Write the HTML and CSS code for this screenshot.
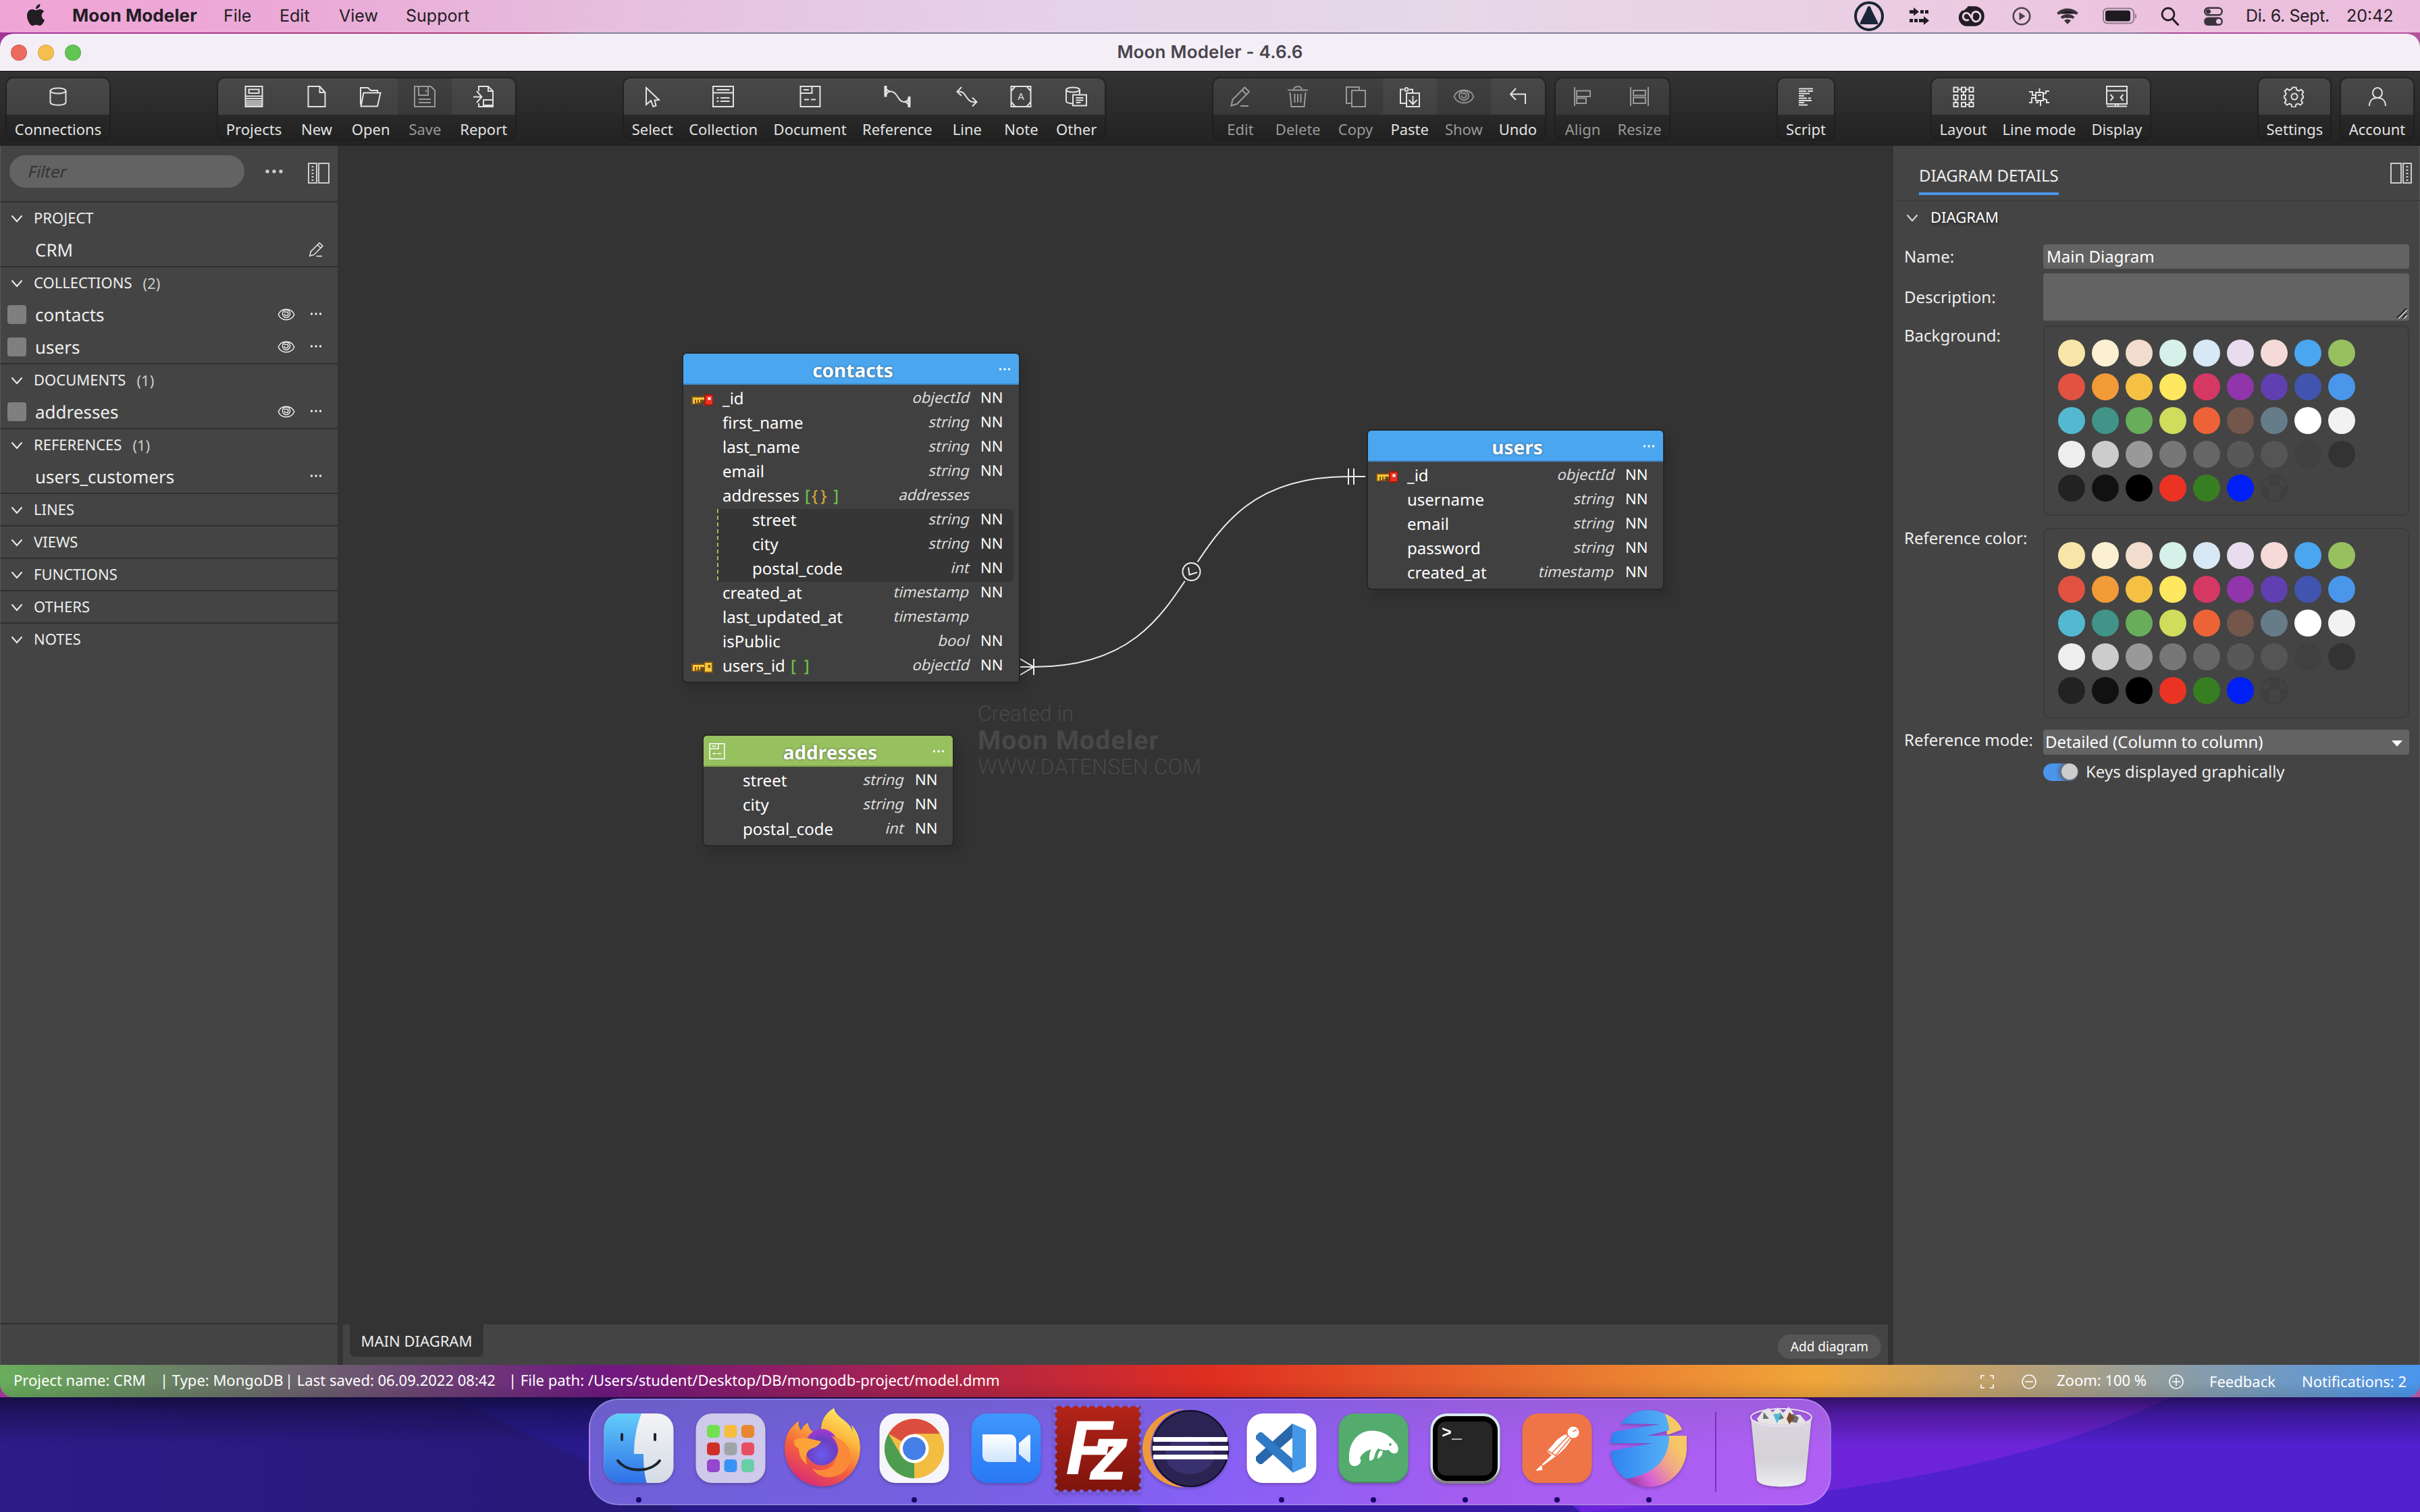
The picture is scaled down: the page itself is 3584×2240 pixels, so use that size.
FILE: index.html
```html
<!DOCTYPE html>
<html lang="en">
<head>
<meta charset="utf-8">
<title>Moon Modeler - 4.6.6</title>
<link rel="stylesheet" href="styles.css">
</head>
<body>
<svg class="defs" aria-hidden="true">
  <defs>
    <symbol id="chevron" viewBox="0 0 18 12"><path d="M1.500 1.500L9 10l7.500-8.500" fill="none" stroke="currentColor" stroke-width="2"/></symbol>
    <symbol id="dots" viewBox="0 0 18 6"><circle cx="2.500" cy="3" r="1.700"/><circle cx="9" cy="3" r="1.700"/><circle cx="15.500" cy="3" r="1.700"/></symbol>
    <symbol id="eye" viewBox="0 0 32 24"><g fill="none" stroke="currentColor" stroke-width="1.800"><path d="M1.500 12C4 6 9.500 2.500 16 2.500S28 6 30.500 12C28 18 22.500 21.500 16 21.500S4 18 1.500 12z"/><circle cx="16" cy="10.500" r="7"/><path d="M12 6.500c1.500 2.500 3 .500 4 .500a3.500 3.500 0 1 1-3.500 3.500"/></g></symbol>
    <symbol id="pencil" viewBox="0 0 32 32"><g fill="none" stroke="currentColor" stroke-width="2"><path d="M2.500 29.500l2-9L22.500 2.500l6.500 6.500L11 27z"/><path d="M18.500 6.500l6.500 6.500M16 30h12"/></g></symbol>
    <symbol id="keyred" viewBox="0 0 32 18"><path d="M0 3h18V0h14v17H18v-6h-3v4H0z" fill="#845512"/><path d="M2 5h17v3H2zM2 5h3v9H2zM7 8h2v5H7zM11 8h2v4h-2z" fill="#f5c83c"/><path d="M19 0h13v17H19z" fill="#a1160e"/><path d="M21 2h10v13H21z" fill="#ec3323"/><path d="M24.500 4.500h4v4h-4z" fill="#fff"/></symbol>
    <symbol id="keygold" viewBox="0 0 32 18"><path d="M0 3h18V0h14v17H18v-6h-3v4H0z" fill="#845512"/><path d="M2 5h17v3H2zM2 5h3v9H2zM7 8h2v5H7zM11 8h2v4h-2zM20 2h10v13H20z" fill="#f5c83c"/><path d="M24.500 5h3.500v4.500h-3.500z" fill="#845512"/></symbol>
    <symbol id="docicon" viewBox="0 0 32 32"><path d="M1.500 1h29v30h-29zM1.500 11h17V1M6 6h8M7 20.500h7M17 20.500h7" fill="none" stroke="currentColor" stroke-width="2"/></symbol>
  </defs>
</svg>

<header class="menubar">
  <svg class="apple" viewBox="0 0 24 24"><path d="M12.152 6.896c-.948 0-2.415-1.078-3.960-1.040-2.040.027-3.910 1.183-4.961 3.014-2.117 3.675-.546 9.103 1.519 12.090 1.013 1.454 2.208 3.090 3.792 3.039 1.520-.065 2.090-.987 3.935-.987 1.831 0 2.350.987 3.960.948 1.637-.026 2.676-1.480 3.676-2.948 1.156-1.688 1.636-3.325 1.662-3.415-.039-.013-3.182-1.221-3.220-4.857-.026-3.040 2.480-4.494 2.597-4.559-1.429-2.090-3.623-2.324-4.390-2.376-2-.156-3.675 1.090-4.610 1.090zM15.530 3.830c.843-1.012 1.400-2.427 1.245-3.830-1.207.052-2.662.805-3.532 1.818-.780.896-1.454 2.338-1.273 3.714 1.338.104 2.715-.688 3.559-1.701"/></svg>
  <nav class="menus"><b>Moon Modeler</b><span>File</span><span>Edit</span><span>View</span><span>Support</span></nav>
  <div class="tray">
    <svg width="44" height="44" viewBox="0 0 44 44"><circle cx="22" cy="22" r="20" fill="none" stroke="#1b2638" stroke-width="4"/><path d="M22 7c2 0 3 3 4 6l9 18c1 2 0 3-1 3H10c-1 0-2-1-1-3l9-18c1-3 2-6 4-6z" fill="#1b2638"/></svg>
    <svg class="t38" width="30" height="28" viewBox="0 0 30 28" fill="#5f5861"><path d="M0 5h6V1l8 6.500-8 6V10H0zM16 5h5v5h-5zM23 5h5v5h-5zM0 18h5v5H0zM7 18h5v5H7zM14 18h7v-4l8 6.500-8 6.500v-4h-7z"/></svg>
    <svg class="t42" width="40" height="32" viewBox="0 0 40 32" fill="none"><path d="M14 2.500h10a13.500 13.500 0 0 1 0 27H12A11.500 11.500 0 0 1 8 8" stroke="#231d24" stroke-width="2.600"/><circle cx="13.500" cy="18" r="11" fill="#231d24"/><circle cx="24.500" cy="15.500" r="11.500" fill="#231d24"/><path d="M17 22c-4 3-9 1-9.500-3.500C7 14 12 11 16 14l8 8c4 2 9-1 9-6.500s-5-9-9.500-7c-4 2-4 6-2 9" stroke="#ecd0e6" stroke-width="2.800" transform="rotate(12 20 16)"/></svg>
    <svg class="t40" width="28" height="28" viewBox="0 0 28 28"><circle cx="14" cy="14" r="12.200" fill="none" stroke="#4a434b" stroke-width="2.600"/><path d="M10.500 8l9 6-9 6z" fill="#4a434b"/></svg>
    <svg class="t38" width="32" height="26" viewBox="0 0 32 26" fill="none" stroke="#3a333b" stroke-width="4"><path d="M1.500 9.500a20.500 20.500 0 0 1 29 0M7 15.500a13 13 0 0 1 18 0"/><path d="M16 25l-5-5.500a7 7 0 0 1 10 0z" fill="#3a333b" stroke="none"/></svg>
    <svg class="t36" width="52" height="26" viewBox="0 0 52 26"><rect x="1" y="1.500" width="45" height="22" rx="6" fill="none" stroke="#8f7d8d" stroke-width="2"/><rect x="4" y="4.500" width="37" height="16" rx="3.500" fill="#1f1a20"/><path d="M48 9c3 1 3 7 0 8z" fill="#8f7d8d"/></svg>
    <svg class="t34" width="28" height="28" viewBox="0 0 28 28"><circle cx="11" cy="11" r="9" fill="none" stroke="#231d24" stroke-width="2.800"/><path d="M17.500 18l8 8.500" stroke="#231d24" stroke-width="3.200" stroke-linecap="round"/></svg>
    <svg class="t36" width="28" height="28" viewBox="0 0 28 28"><rect x="1.200" y="1.800" width="25.600" height="10.500" rx="5.200" fill="none" stroke="#3a333b" stroke-width="2.400"/><circle cx="6.500" cy="7" r="3.500" fill="#3a333b"/><rect x="0" y="15.500" width="28" height="12.500" rx="6.200" fill="#3a333b"/><circle cx="21.800" cy="21.700" r="3.800" fill="#ecc6e0"/></svg>
    <span class="date">Di. 6. Sept.</span><span class="time">20:42</span>
  </div>
</header>

<main class="window">
  <div class="titlebar"><i class="light red"></i><i class="light amber"></i><i class="light green"></i><h1>Moon Modeler - 4.6.6</h1></div>

  <div class="toolbar">
    <div class="group g1">
      <button class="tool"><span class="ico"><svg viewBox="0 0 32 32"><ellipse cx="16" cy="7.500" rx="11.500" ry="4"/><path d="M4.500 7.500v17c0 5.500 23 5.500 23 0v-17"/></svg></span><em>Connections</em></button>
    </div>
    <div class="group g2">
      <button class="tool"><span class="ico"><svg viewBox="0 0 32 32"><path d="M3.500 1h25v30h-25zM8.500 5.500h15V11h-15zM4 15.500h24M4 19h24M4 22.500h24M4 25.500h24M4 28.500h24"/></svg></span><em>Projects</em></button>
      <button class="tool"><span class="ico"><svg viewBox="0 0 32 32"><path d="M3.500 1h17l8 9v21h-25zM20.500 1v9h8"/></svg></span><em>New</em></button>
      <button class="tool"><span class="ico"><svg viewBox="0 0 32 32"><path d="M1 28V3h11l4 4h10v4M5.500 10.500h25L26 30.500H1.500z"/></svg></span><em>Open</em></button>
      <button class="tool off"><span class="ico"><svg viewBox="0 0 32 32"><path d="M1 1h24l6 6v24H1zM7 1v13h14V1M18 6.500v3M7 20h18M7 25h18"/></svg></span><em>Save</em></button>
      <button class="tool"><span class="ico"><svg viewBox="0 0 32 32"><path d="M9 8V1h14l7 7v23H9v-5M23 1v7h7M30 21H16v8h14M1 16.500h12M6 8l7.500 8.500L6 25"/></svg></span><em>Report</em></button>
    </div>
    <div class="group g3">
      <button class="tool"><span class="ico"><svg viewBox="0 0 32 32"><path d="M7 3l19 18-6.500.500 2 8-4 1.500-3.500-9L7 28z"/></svg></span><em>Select</em></button>
      <button class="tool"><span class="ico"><svg viewBox="0 0 32 32"><path d="M1 1h30v30H1zM1 10.500h30M6.500 6h19M6.500 18h3M12 18h13.500M6.500 23h3M12 23h13.500"/></svg></span><em>Collection</em></button>
      <button class="tool"><span class="ico"><svg><use href="#docicon"/></svg></span><em>Document</em></button>
      <button class="tool"><span class="ico"><svg class="wide" viewBox="0 0 40 32"><path d="M1.500 1h2v14.500h-2zM3.500 3c0 3 3 5.500 7 5.500M3.500 14c0-3 3-5.500 7-5.500 4 0 7 3 10 8s5 7.500 9 7.500M36.500 17h2v14.500h-2zM36.500 18.500c0 3-3 5.500-7 5.500M36.500 29.500c0-3-3-5.500-7-5.500"/></svg></span><em>Reference</em></button>
      <button class="tool"><span class="ico"><svg viewBox="0 0 32 32"><path d="M8 2L1.500 9 8 15M1.500 9c9-1 10 2 14 8s7 8 15 7M24 17.500l6.500 6.500-6.500 6.500"/></svg></span><em>Line</em></button>
      <button class="tool"><span class="ico"><svg viewBox="0 0 32 32"><path d="M1.500 1h29v30h-29zM1.500 8l6-7M30.500 8l-6-7M1.500 24l6 7M30.500 24l-6 7"/><text x="16" y="20.500">A</text></svg></span><em>Note</em></button>
      <button class="tool"><span class="ico"><svg viewBox="0 0 32 32"><ellipse cx="11" cy="6" rx="10" ry="3.500"/><path d="M1 6v17c0 2 4 3 9 3.500M21 6v7M11 13.500h20v16H11zM15.500 18h11M15.500 21.500h11M15.500 25h7"/></svg></span><em>Other</em></button>
    </div>
    <div class="group g4">
      <button class="tool off"><span class="ico"><svg><use href="#pencil"/></svg></span><em>Edit</em></button>
      <button class="tool off"><span class="ico"><svg viewBox="0 0 32 32"><path d="M1 6.500h30M10 6c0-6.500 12-6.500 12 0M4.500 10l2 21h19l2-21M11.500 12v13M16 12v13M20.500 12v13"/></svg></span><em>Delete</em></button>
      <button class="tool off"><span class="ico"><svg viewBox="0 0 32 32"><path d="M10 26H2V2h19v4M10 7h20v24H10z"/></svg></span><em>Copy</em></button>
      <button class="tool"><span class="ico"><svg viewBox="0 0 32 32"><path d="M10 26H2V5.500h5M15 5.500h5V10M11 11h19v20H11zM20.500 15v12M14.500 21l6 6.500 6-6.500"/><circle cx="11" cy="5.500" r="2.500"/></svg></span><em>Paste</em></button>
      <button class="tool off"><span class="ico"><svg><use href="#eye"/></svg></span><em>Show</em></button>
      <button class="tool"><span class="ico"><svg viewBox="0 0 32 32"><path d="M13 4L5 12.500l8 8.500M5 12.500h22V27"/></svg></span><em>Undo</em></button>
    </div>
    <div class="group g5">
      <button class="tool off"><span class="ico"><svg viewBox="0 0 32 32"><path d="M4 2v28M7 7.500h20v8.500H7zM7 18.500h14v7.500H7z"/></svg></span><em>Align</em></button>
      <button class="tool off"><span class="ico"><svg viewBox="0 0 32 32"><path d="M3 2v28M29 2v28M7 7h18v7.500H7zM7 17.500h18V26H7z"/></svg></span><em>Resize</em></button>
    </div>
    <div class="group g6">
      <button class="tool"><span class="ico"><svg viewBox="0 0 32 32"><path d="M5 4.500h21M5 8h11M18 8h8M5 11.500h16M5 15h8M5 18.500h12M19 18.500h4M5 22h19M5 25h8M5 28.500h13"/></svg></span><em>Script</em></button>
    </div>
    <div class="group g7">
      <button class="tool"><span class="ico"><svg viewBox="0 0 32 32"><path d="M1.500 2.500h6V9h-6zM13 2.500h6V9h-6zM24.500 2.500h6V9h-6zM1.500 14h6v6.500h-6zM13 14h6v6.500h-6zM24.500 14h6v6.500h-6zM1.500 25h6v6h-6zM13 25h6v6h-6zM24.500 25h6v6h-6zM7.500 5.500H13M19 5.500h5.500M16 9v5M4.500 20.500V25M27.500 20.500V25M19 28h5.500"/></svg></span><em>Layout</em></button>
      <button class="tool"><span class="ico"><svg viewBox="0 0 32 32"><path d="M11 10h11v12H11zM14 14h5M16.500 4v6M1 9h5v5h5M22 12l4-1V8h5M11 18H5v7H1M14 22v3h-3M18 22v8M22 19l5 2v4h4"/></svg></span><em>Line mode</em></button>
      <button class="tool"><span class="ico"><svg viewBox="0 0 32 32"><path d="M1 1h30v26H1zM1 7.500h30M6.500 13l4 4.500-4 4.500M25.500 13l-4 4.500 4 4.500M1 30.500h30M14 27v3M18 27v3"/></svg></span><em>Display</em></button>
    </div>
    <div class="group g8">
      <button class="tool"><span class="ico"><svg viewBox="0 0 32 32"><circle cx="16" cy="16" r="4.500"/><path d="M13.500 2.500h5l1 4 3 1.200 3.600-2 3.200 3.400-2 3.500 1.200 3 .500 0v2.500l-1.700.800-1.200 3 2 3.300-3.200 3.400-3.500-2-3 1.200-1 4h-5l-1-4-3-1.200-3.400 2-3.300-3.400 2-3.400-1.200-3-2-1v-2.500l2-.900 1.200-2.900-2-3.500 3.300-3.400 3.400 2 3-1.200z"/></svg></span><em>Settings</em></button>
    </div>
    <div class="group g9">
      <button class="tool"><span class="ico"><svg viewBox="0 0 32 32"><ellipse cx="16" cy="10.500" rx="7" ry="7.500"/><path d="M4 30c0-8 5-12 12-12s12 4 12 12"/></svg></span><em>Account</em></button>
    </div>
  </div>

  <div class="workspace">
    <aside class="sidebar">
      <div class="filterbar">
        <div class="filter"><span>Filter</span></div>
        <svg class="more" viewBox="0 0 28 8"><circle cx="4" cy="4" r="2.700"/><circle cx="14" cy="4" r="2.700"/><circle cx="24" cy="4" r="2.700"/></svg>
        <svg class="panelico" viewBox="0 0 32 31"><path d="M1 1h12v29H1zM16 1h15v29H16z" fill="none" stroke="#ccc" stroke-width="2"/><path d="M7 5v22" stroke="#ccc" stroke-width="3" stroke-dasharray="2 3"/></svg>
      </div>
      <section><h2><svg><use href="#chevron"/></svg>PROJECT</h2>
        <div class="item"><i></i><span>CRM</span><svg class="pen"><use href="#pencil"/></svg></div></section>
      <section><h2><svg><use href="#chevron"/></svg>COLLECTIONS<small>(2)</small></h2>
        <div class="item"><i class="box"></i><span>contacts</span><svg class="eye"><use href="#eye"/></svg><svg class="dots"><use href="#dots"/></svg></div>
        <div class="item"><i class="box"></i><span>users</span><svg class="eye"><use href="#eye"/></svg><svg class="dots"><use href="#dots"/></svg></div></section>
      <section><h2><svg><use href="#chevron"/></svg>DOCUMENTS<small>(1)</small></h2>
        <div class="item"><i class="box"></i><span>addresses</span><svg class="eye"><use href="#eye"/></svg><svg class="dots"><use href="#dots"/></svg></div></section>
      <section><h2><svg><use href="#chevron"/></svg>REFERENCES<small>(1)</small></h2>
        <div class="item"><i></i><span>users_customers</span><svg class="dots"><use href="#dots"/></svg></div></section>
      <section><h2><svg><use href="#chevron"/></svg>LINES</h2></section>
      <section><h2><svg><use href="#chevron"/></svg>VIEWS</h2></section>
      <section><h2><svg><use href="#chevron"/></svg>FUNCTIONS</h2></section>
      <section><h2><svg><use href="#chevron"/></svg>OTHERS</h2></section>
      <section class="last"><h2><svg><use href="#chevron"/></svg>NOTES</h2></section>
      <div class="sidefoot"></div>
    </aside>

    <div class="center">
      <div class="canvas">
        <svg class="links" viewBox="500 216 2304 1746">
          <path d="M1509 988H1531C1812 988 1716 706 1997 706H2022M1509 975l22 13-22 13M1531 976v24M1997 694v24M2005 694v24" fill="none" stroke="#eee" stroke-width="2"/>
          <circle cx="1764.500" cy="847" r="17" fill="#333"/>
          <circle cx="1764.500" cy="847" r="13" fill="none" stroke="#eee" stroke-width="2"/>
          <path d="M1760 840.500l1.500 11 11.500-3.500" fill="none" stroke="#eee" stroke-width="2"/>
        </svg>
        <div class="watermark"><span>Created in</span><b>Moon Modeler</b><span class="site">WWW.DATENSEN.COM</span></div>

        <article class="node contacts">
          <header><h3>contacts</h3><svg class="dots"><use href="#dots"/></svg></header>
          <div class="row"><svg class="key"><use href="#keyred"/></svg><span>_id</span><em>objectId</em><b>NN</b></div>
          <div class="row"><span>first_name</span><em>string</em><b>NN</b></div>
          <div class="row"><span>last_name</span><em>string</em><b>NN</b></div>
          <div class="row"><span>email</span><em>string</em><b>NN</b></div>
          <div class="row"><span>addresses<i class="sq open">[</i><i class="cu">{</i><i class="cu two">}</i><i class="sq far">]</i></span><em>addresses</em><b></b></div>
          <div class="nested">
            <div class="row"><span>street</span><em>string</em><b>NN</b></div>
            <div class="row"><span>city</span><em>string</em><b>NN</b></div>
            <div class="row"><span>postal_code</span><em>int</em><b>NN</b></div>
          </div>
          <div class="row"><span>created_at</span><em>timestamp</em><b>NN</b></div>
          <div class="row"><span>last_updated_at</span><em>timestamp</em><b></b></div>
          <div class="row"><span>isPublic</span><em>bool</em><b>NN</b></div>
          <div class="row"><svg class="key"><use href="#keygold"/></svg><span>users_id<i class="sq open">[</i><i class="sq wide">]</i></span><em>objectId</em><b>NN</b></div>
        </article>

        <article class="node addresses">
          <header><svg class="doc"><use href="#docicon"/></svg><h3>addresses</h3><svg class="dots"><use href="#dots"/></svg></header>
          <div class="row"><span>street</span><em>string</em><b>NN</b></div>
          <div class="row"><span>city</span><em>string</em><b>NN</b></div>
          <div class="row"><span>postal_code</span><em>int</em><b>NN</b></div>
        </article>

        <article class="node users">
          <header><h3>users</h3><svg class="dots"><use href="#dots"/></svg></header>
          <div class="row"><svg class="key"><use href="#keyred"/></svg><span>_id</span><em>objectId</em><b>NN</b></div>
          <div class="row"><span>username</span><em>string</em><b>NN</b></div>
          <div class="row"><span>email</span><em>string</em><b>NN</b></div>
          <div class="row"><span>password</span><em>string</em><b>NN</b></div>
          <div class="row"><span>created_at</span><em>timestamp</em><b>NN</b></div>
        </article>
      </div>
      <div class="tabs"><div class="tab">MAIN DIAGRAM</div><button class="add">Add diagram</button></div>
    </div>

    <aside class="details">
      <div class="dhead"><h2>DIAGRAM DETAILS</h2>
        <svg class="panelico" viewBox="0 0 32 31"><path d="M1 1h15v29H1zM19 1h12v29H19z" fill="none" stroke="#ccc" stroke-width="2"/><path d="M25 5v22" stroke="#ccc" stroke-width="3" stroke-dasharray="2 3"/></svg></div>
      <h4><svg><use href="#chevron"/></svg>DIAGRAM</h4>
      <div class="field name"><label>Name:</label><div class="input">Main Diagram</div></div>
      <div class="field desc"><label>Description:</label><div class="input area"><svg viewBox="0 0 16 16"><path d="M1 15L15 1M9 15l6-6" stroke="#222" stroke-width="2"/><path d="M3 16L16 3M11 16l5-5" stroke="#ddd" stroke-width="1.500"/></svg></div></div>
      <div class="field pick"><label>Background:</label><div class="palette">
        <i style="background:#f7e6a8"></i><i style="background:#fbf1d2"></i><i style="background:#f1dccd"></i><i style="background:#d6f1e9"></i><i style="background:#d8e8f5"></i><i style="background:#e8dcee"></i><i style="background:#f5dad7"></i><i style="background:#4aa6ef"></i><i style="background:#97c05f"></i>
        <i style="background:#e15241"></i><i style="background:#f19c38"></i><i style="background:#f5c144"></i><i style="background:#fee860"></i><i style="background:#d63864"></i><i style="background:#9035aa"></i><i style="background:#603fb0"></i><i style="background:#4154af"></i><i style="background:#4a96ea"></i>
        <i style="background:#53b9d1"></i><i style="background:#419488"></i><i style="background:#67ad5b"></i><i style="background:#d0dc5b"></i><i style="background:#ed6337"></i><i style="background:#74564a"></i><i style="background:#667c89"></i><i style="background:#fff"></i><i style="background:#f2f2f2"></i>
        <i style="background:#eee"></i><i style="background:#ccc"></i><i style="background:#999"></i><i style="background:#777"></i><i style="background:#666"></i><i style="background:#585858"></i><i style="background:#555"></i><i style="background:#404040"></i><i style="background:#333"></i>
        <i style="background:#222"></i><i style="background:#111"></i><i style="background:#000"></i><i style="background:#eb3324"></i><i style="background:#377e22"></i><i style="background:#001ff5"></i><i class="none"></i>
      </div></div>
      <div class="field pick"><label>Reference color:</label><div class="palette">
        <i style="background:#f7e6a8"></i><i style="background:#fbf1d2"></i><i style="background:#f1dccd"></i><i style="background:#d6f1e9"></i><i style="background:#d8e8f5"></i><i style="background:#e8dcee"></i><i style="background:#f5dad7"></i><i style="background:#4aa6ef"></i><i style="background:#97c05f"></i>
        <i style="background:#e15241"></i><i style="background:#f19c38"></i><i style="background:#f5c144"></i><i style="background:#fee860"></i><i style="background:#d63864"></i><i style="background:#9035aa"></i><i style="background:#603fb0"></i><i style="background:#4154af"></i><i style="background:#4a96ea"></i>
        <i style="background:#53b9d1"></i><i style="background:#419488"></i><i style="background:#67ad5b"></i><i style="background:#d0dc5b"></i><i style="background:#ed6337"></i><i style="background:#74564a"></i><i style="background:#667c89"></i><i style="background:#fff"></i><i style="background:#f2f2f2"></i>
        <i style="background:#eee"></i><i style="background:#ccc"></i><i style="background:#999"></i><i style="background:#777"></i><i style="background:#666"></i><i style="background:#585858"></i><i style="background:#555"></i><i style="background:#404040"></i><i style="background:#333"></i>
        <i style="background:#222"></i><i style="background:#111"></i><i style="background:#000"></i><i style="background:#eb3324"></i><i style="background:#377e22"></i><i style="background:#001ff5"></i><i class="none"></i>
      </div></div>
      <div class="field mode"><label>Reference mode:</label><div class="input select">Detailed (Column to column)<svg viewBox="0 0 16 9"><path d="M0 0h16L8 9z" fill="#fff"/></svg></div></div>
      <div class="keys"><span class="switch"></span>Keys displayed graphically</div>
    </aside>
  </div>

  <footer class="status">
    <span class="s1">Project name: CRM</span><span class="s2">| Type: MongoDB</span><span class="s3">| Last saved: 06.09.2022 08:42</span><span class="s4">| File path: /Users/student/Desktop/DB/mongodb-project/model.dmm</span>
    <div class="right">
      <svg class="expand" viewBox="0 0 20 20"><path d="M1 6V1h5M14 1h5v5M19 14v5h-5M6 19H1v-5" fill="none" stroke="#fff" stroke-width="1.600"/></svg>
      <svg class="minus" viewBox="0 0 22 22"><circle cx="11" cy="11" r="10" fill="none" stroke="#fff" stroke-width="1.500"/><path d="M5 11h12" stroke="#fff" stroke-width="1.500"/></svg>
      <span class="zoom">Zoom: 100 %</span>
      <svg class="plus" viewBox="0 0 22 22"><circle cx="11" cy="11" r="10" fill="none" stroke="#fff" stroke-width="1.500"/><path d="M5 11h12M11 5v12" stroke="#fff" stroke-width="1.500"/></svg>
      <span class="fb">Feedback</span><span class="nt">Notifications: 2</span>
    </div>
  </footer>
</main>

<div class="desk">
  <svg class="wall" viewBox="0 0 3584 170" preserveAspectRatio="none">
    <path d="M660 0C780 50 900 110 1010 170H3584V0z" fill="#2a1c9c" opacity=".55"/>
    <path d="M1690 170C1660 130 1640 60 1620 0H3584V170z" fill="#3a19a8" opacity=".8"/>
    <path d="M2340 170C2290 130 2270 60 2250 0H3584V170z" fill="#5a22d4"/>
    <path d="M2340 0H3215C3060 75 2900 110 2700 140L2340 170z" fill="#7226da" opacity=".8"/>
    <path d="M3215 0C3060 75 2900 110 2700 140L2600 170H3584V0z" fill="#4a1fcb" opacity=".55"/>
  </svg>
  <nav class="dock">
    <span class="app run"><svg viewBox="0 0 136 132"><defs><linearGradient id="fa" x2="0" y2="1"><stop stop-color="#62cdf9"/><stop offset="1" stop-color="#2e6fe8"/></linearGradient><linearGradient id="fb" x2="0" y2="1"><stop stop-color="#f4f4f6"/><stop offset="1" stop-color="#d2dbe4"/></linearGradient><clipPath id="sq"><rect x="16.500" y="16" width="103" height="103" rx="24"/></clipPath></defs><g clip-path="url(#sq)"><path d="M16 16h104v104H16z" fill="url(#fb)"/><path d="M16 16h56c-8 20-11 40-11 60h14c0 15 1 30 5 44H16z" fill="url(#fa)"/></g><g fill="none" stroke="#1b2430" stroke-width="4" stroke-linecap="round"><path d="M43 47v8M92 47v8M37 86c14 18 48 18 62 0"/></g></svg></span>
    <span class="app"><svg viewBox="0 0 136 132"><rect x="16.500" y="16" width="103" height="103" rx="24" fill="#cfc9ea"/><g><rect x="33" y="33" width="19" height="19" rx="5" fill="#72e04f"/><rect x="58.500" y="33" width="19" height="19" rx="5" fill="#f7bd3c"/><rect x="84" y="33" width="19" height="19" rx="5" fill="#e8872f"/><rect x="33" y="59" width="19" height="19" rx="5" fill="#cf3026"/><rect x="58.500" y="59" width="19" height="19" rx="5" fill="#9ea5a9"/><rect x="84" y="59" width="19" height="19" rx="5" fill="#e94d63"/><rect x="33" y="84" width="19" height="19" rx="5" fill="#9347cf"/><rect x="58.500" y="84" width="19" height="19" rx="5" fill="#3793f4"/><rect x="84" y="84" width="19" height="19" rx="5" fill="#68cfa6"/></g></svg></span>
    <span class="app"><svg viewBox="0 0 136 132"><defs><linearGradient id="ff" x1=".8" y1="0" x2=".3" y2="1"><stop stop-color="#fff36a"/><stop offset=".35" stop-color="#fbb03b"/><stop offset=".65" stop-color="#f4603c"/><stop offset="1" stop-color="#d92a78"/></linearGradient><radialGradient id="fg" cx=".5" cy=".7" r=".7"><stop stop-color="#6b5cf0"/><stop offset=".6" stop-color="#6a3fc0"/><stop offset="1" stop-color="#a33ad8"/></radialGradient></defs><path d="M85 8c-14 8-19 20-19 32-5 0-9 1-12 3-5-4-7-8-7-13-5 2-9 6-10 11-4-4-5-9-4-14C18 38 12 50 12 68c0 32 26 56 56 56s56-24 56-57c0-14-5-26-13-34l2 11C109 26 89 24 85 8z" fill="url(#ff)"/><ellipse cx="67" cy="66" rx="25" ry="27" fill="url(#fg)"/><path d="M26 56c6-5 16-4 22-3 5 1 10 3 18 4-3 7-9 9-14 11-8 3-11 14-6 24-8-5-13-14-13-24-5-2-8-7-7-12z" fill="#fba238"/><path d="M81 49c12 12 14 28 4 42-8 9-22 12-32 6 10 20 46 18 56-8 5-18-6-34-28-40z" fill="#fa8a38"/></svg></span>
    <span class="app run"><svg viewBox="0 0 136 132"><rect x="16.500" y="16" width="103" height="103" rx="24" fill="#f7f5fc"/><circle cx="68" cy="68" r="44" fill="#f3bd42"/><path d="M68 68L29.900 46A44 44 0 0 1 106 46z" fill="#dc4f3e"/><path d="M68 112A44 44 0 0 1 29.900 46L49 79 68 90 87 79z" fill="#4c9d4f"/><path d="M68 112L87 79 68 68z" fill="#f3bd42"/><path d="M68 46h38.100L68 68z" fill="#dc4f3e"/><path d="M68 46h38.100A44 44 0 0 1 68 112l19-33z" fill="#f3bd42"/><circle cx="68" cy="68" r="21.500" fill="#fff"/><circle cx="68" cy="68" r="17" fill="#437fe6"/></svg></span>
    <span class="app"><svg viewBox="0 0 136 132"><defs><linearGradient id="zb" x2="0" y2="1"><stop stop-color="#3f97fb"/><stop offset="1" stop-color="#2a78f4"/></linearGradient><linearGradient id="zc" x2="0" y2="1"><stop stop-color="#fff"/><stop offset="1" stop-color="#cfe4fd"/></linearGradient></defs><rect x="16.500" y="16" width="103" height="103" rx="24" fill="url(#zb)"/><path d="M33 47h40c6 0 10 4 10 10v31H43c-6 0-10-4-10-10zM87 60l14-12c1-1 3 0 3 2v36c0 2-2 3-3 2L87 76z" fill="url(#zc)"/></svg></span>
    <span class="app"><svg viewBox="0 0 136 132"><defs><linearGradient id="fz" x2="0" y2="1"><stop stop-color="#b32418"/><stop offset="1" stop-color="#7d140d"/></linearGradient></defs><rect x="5" y="5" width="126" height="126" fill="url(#fz)"/><rect x="4.500" y="4.500" width="127" height="127" fill="none" stroke="#7a62e2" stroke-width="6" stroke-dasharray="0 12.200" stroke-linecap="round"/><text class="fz" x="20" y="106">F<tspan dx="-34" dy="8">z</tspan></text></svg></span>
    <span class="app"><svg viewBox="0 0 136 132"><path d="M60 9C22 12-2 38-2 68s24 56 62 58C30 118 10 96 10 68S30 16 60 9z" fill="#ee9a3a"/><circle cx="69" cy="68" r="56" fill="#2b2453" stroke="#0d0a1c" stroke-width="2"/><ellipse cx="68" cy="78" rx="36" ry="28" fill="#413a80" opacity=".6"/><path d="M14 51h110v7H14zM13 64h112v7H13zM14 77h110v7H14z" fill="#fff"/></svg></span>
    <span class="app run"><svg viewBox="0 0 136 132"><rect x="16.500" y="16" width="103" height="103" rx="24" fill="#fff"/><path d="M84 31L30 80v6l5 5h4L84 52z" fill="#2867ab"/><path d="M84 103L30 54v-5l5-5h4L84 83z" fill="#3079c4"/><path d="M84 31l20 9v55l-20 9z" fill="#4598e6"/></svg></span>
    <span class="app run"><svg viewBox="0 0 136 132"><rect x="16.500" y="16" width="103" height="103" rx="24" fill="#478f5d"/><rect x="16.500" y="16" width="103" height="101" rx="24" fill="#53ac6e"/><path d="M32 80C32 55 50 38 72 42c15 2 24 11 31 20 3 6 2 12-2 13-4 1-8-1-10-5-6 1-11 0-16-2-3 3-4 6-5 10-1 5-3 8-8 8 0-6 0-12 3-17-8 2-14 7-17 13 3 4 1 11-8 12-9-1-8-9-8-14z" fill="#fff"/><path d="M82 72c-1 6-3 9-8 11 0-5 1-8 4-12z" fill="#fff"/><circle cx="93" cy="62" r="2" fill="#53ac6e"/></svg></span>
    <span class="app run"><svg viewBox="0 0 136 132"><rect x="16.500" y="17" width="103" height="103" rx="24" fill="#858585"/><rect x="16.500" y="16" width="103" height="100" rx="24" fill="#d6e9ee"/><rect x="20" y="20" width="96" height="96" rx="21" fill="#000"/><rect x="27" y="28" width="81" height="80" rx="12" fill="#262626"/><text class="prompt" x="33" y="52">&gt;_</text></svg></span>
    <span class="app run"><svg viewBox="0 0 136 132"><rect x="16.500" y="16" width="103" height="103" rx="24" fill="#ef7548"/><g fill="#fff"><circle cx="92" cy="44" r="8.500"/><path d="M81 47c-8 3-14 8-18 14L53 72l7 6-15 14-9 9 10-1v-6l22-16c9-7 17-16 21-24z"/></g><path d="M85 49L60 75M88 52L66 78M54 71l13 8M44 92l5 3M91 43l6-3" stroke="#ef7548" stroke-width="1.600"/></svg></span>
    <span class="app run"><svg viewBox="0 0 136 132"><defs><linearGradient id="mb" x1="0" x2="1"><stop stop-color="#2f83f0"/><stop offset="1" stop-color="#55b0f6"/></linearGradient><linearGradient id="mo" x1="0" y1="1" x2=".7" y2=".3"><stop stop-color="#8b2a9a"/><stop offset=".35" stop-color="#d65fd6"/><stop offset=".7" stop-color="#f0a58a"/><stop offset="1" stop-color="#f7c766"/></linearGradient></defs><path d="M91 16c13 5 22 13 26 24l-22 8zM98 49h26v19c0 31-25 57-56 57-13 0-24-4-34-12 40-10 62-34 64-64z" fill="url(#mo)"/><path d="M26 31C37 17 50 11 68 11c9 0 17 2 24 6 4 10 6 18 6 24L65 49h33c0 4 0 8-1 12-4 28-26 46-63 52C20 103 12 88 11 72l62-12H11c1-8 2-12 5-17l68-11z" fill="url(#mb)"/></svg></span>
    <i class="rule"></i>
    <span class="app"><svg viewBox="0 0 136 132"><defs><linearGradient id="tb" x2="0" y2="1"><stop stop-color="#dcd5e0"/><stop offset=".6" stop-color="#d4d2d6"/><stop offset="1" stop-color="#ececf0"/></linearGradient></defs><path d="M32 24l9-12 8-4 6 6 8-7 8 8 8-9 9 12 8 0 10 12-6 10H40z" fill="#e8e6e4"/><path d="M42 14l8 10h-9zM66 14l6 9-9 3zM85 16l9 6-3 8-11-2z" fill="#6b7078"/><path d="M23 22c8 14 82 14 90 0l-9 92c-2 14-70 14-72 0z" fill="url(#tb)"/><path d="M56 17l12-1-6 15z" fill="#52b8d8"/><path d="M80 14l8 8-8 10-4-8z" fill="#7a4a2c"/><ellipse cx="68" cy="22" rx="45" ry="13" fill="none" stroke="#e9def2" stroke-width="2"/></svg></span>
  </nav>
</div>
</body>
</html>
```
FILE: styles.css
```css
* { box-sizing: border-box; margin: 0; padding: 0; }
body { width: 3584px; height: 2240px; overflow: hidden; display: flex; flex-direction: column; font-family: "Noto Sans", sans-serif; text-rendering: geometricPrecision; color: #eee; background: linear-gradient(90deg, #a1359a 0, #a8406e 22%, #857f98 24%, #857f98 88%, #a8459a 90%, #b5559c 100%); }
button { font: inherit; color: inherit; border: 0; background: none; }
i, em { font-style: normal; }
svg { display: block; fill: currentColor; flex: none; }
.defs { position: absolute; width: 0; height: 0; }

/* menu bar */
.menubar { height: 48px; display: flex; align-items: center; padding: 0 38px 0 37px; background: linear-gradient(90deg, #f0a5d6 0, #eba9d7 12%, #e6c0de 26%, #e5d2e9 43%, #e6d7e9 60%, #ead1e5 74%, #ecc3df 88%, #ecbcdc 100%); color: #231d24; font-family: Inter, sans-serif; font-size: 25px; margin-bottom: 2px; flex: none; }
.apple { width: 32px; height: 32px; margin-top: -4px; }
.menus { display: grid; grid-template-columns: 224px 83px 88px 99px 110px; margin-left: 38px; line-height: 46px; letter-spacing: 0; }
.menus b { font-weight: 700; font-size: 26px; letter-spacing: .1px; white-space: nowrap; }
.tray { margin-left: auto; display: flex; align-items: center; line-height: 46px; letter-spacing: -.4px; }
.t34 { margin-left: 34px; } .t36 { margin-left: 36px; } .t38 { margin-left: 38px; } .t40 { margin-left: 40px; } .t42 { margin-left: 42px; }
.date { width: 149px; margin-left: 34px; white-space: nowrap; }
.time { width: 71px; white-space: nowrap; letter-spacing: 0; }

/* window frame */
.window { height: 2020px; flex: none; display: flex; flex-direction: column; border-radius: 20px; overflow: hidden; position: relative; z-index: 1; }
.titlebar { height: 56px; flex: none; display: grid; grid-template-columns: 40px 40px 40px 1fr 136px; align-items: center; padding-left: 16px; background: #f4eff7; border-bottom: 1px solid #111; }
.titlebar h1 { text-align: center; font: 600 26px/52px Inter, sans-serif; color: #49454c; letter-spacing: .2px; }
.light { width: 24px; height: 24px; border-radius: 50%; border: 1px solid rgba(0, 0, 0, .12); }
.red { background: #ec6a5e; } .amber { background: #f5bf4f; } .green { background: #61c554; }

/* toolbar */
.toolbar { height: 110px; flex: none; display: flex; padding: 10px 10px 0; background: linear-gradient(#333, #222); }
.group { height: 90px; display: flex; border-radius: 10px; overflow: hidden; box-shadow: 0 0 3px 1px #1a1a1a; }
.g1 { width: 152px; } .g2 { width: 440px; margin-left: 161px; } .g3 { width: 712px; margin-left: 161px; }
.g4 { width: 491px; margin-left: 161px; } .g5 { width: 168px; margin-left: 16px; } .g6 { width: 83px; margin-left: 161px; }
.g7 { width: 323px; margin-left: 145px; } .g8 { width: 106px; margin-left: 161px; } .g9 { width: 107px; margin-left: 16px; }
.tool { flex: 1 0 auto; min-width: 80px; display: flex; flex-direction: column; color: #e2e2e2; }
.ico { height: 54px; width: 100%; display: flex; align-items: center; justify-content: center; background: linear-gradient(#484848, #404040); }
.ico svg { width: 32px; height: 32px; margin-top: -1px; fill: none; stroke: currentColor; stroke-width: 2; }
.ico svg.wide { width: 40px; }
.ico text { font: 15px "Open Sans", sans-serif; text-anchor: middle; fill: currentColor; stroke: none; }
.tool em { display: block; width: 100%; height: 36px; padding: 0 11.500px; font-size: 22px; line-height: 42px; text-align: center; white-space: nowrap; background: linear-gradient(#292929, #212121); }
.off { color: #999; }
.off .ico { background: linear-gradient(#404040, #383838); }

/* workspace */
.workspace { height: 1806px; flex: none; display: grid; grid-template-columns: 500px 2304px 780px; background: #333; }
.sidebar { background: #444; display: flex; flex-direction: column; box-shadow: inset 1px 0 #5a5a5a; }
.filterbar { height: 84px; flex: none; border-bottom: 2px solid #303030; display: flex; padding: 14px 0 0 14px; }
.filter { width: 348px; height: 48px; border-radius: 24px; background: #636363; color: #333; font-size: 24px; line-height: 49px; padding-left: 26px; }
.filter span { display: inline-block; transform: skewX(-14deg); transform-origin: 0 33px; }
.more { width: 28px; height: 8px; margin: 20px 0 0 30px; fill: #ccc; }
.panelico { width: 32px; height: 31px; }
.filterbar .panelico { margin: 11px 0 0 36px; }
section { border-bottom: 2px solid #303030; flex: none; }
section.last { border: 0; }
section > :last-child { height: 46px; }
h2 { height: 48px; display: flex; font-weight: 400; font-size: 22px; line-height: 46px; padding-left: 16px; }
h2 svg { width: 18px; height: 12px; margin: 18px 16px 0 0; }
h2 small { font-size: 22px; color: #ccc; margin: 1px 0 0 16px; }
.item { height: 48px; display: flex; font-size: 26px; line-height: 44px; padding: 0 23px 0 11px; }
.item i { width: 28px; height: 28px; margin: 8px 13px 0 0; }
.item .box { background: #7f7f7f; border-radius: 4px; }
.item span { flex: 1; }
.item .eye { width: 26px; height: 20px; margin-top: 12px; }
.dots { width: 18px; height: 6px; }
.item .dots { margin: 18px 0 0 22px; }
.item .pen { width: 23px; height: 23px; margin: 10px -3px 0 0; }
.sidefoot { margin-top: auto; height: 62px; border-top: 2px solid #303030; }

.center { display: flex; flex-direction: column; }
.canvas { height: 1746px; position: relative; }
.links { position: absolute; inset: 0; width: 2304px; height: 1746px; }
.watermark { position: absolute; left: 948px; top: 822px; display: flex; flex-direction: column; color: #484848; font-family: Roboto, sans-serif; font-size: 32px; font-weight: 300; line-height: 38px; }
.watermark b { font-size: 39px; font-weight: 700; letter-spacing: 1.200px; line-height: 42px; }
.watermark .site { letter-spacing: .200px; line-height: 36px; }

.node { position: absolute; background: #404040; border-radius: 5px; box-shadow: 0 0 0 2px #262626, 8px 10px 18px 2px rgba(0, 0, 0, .14); padding-bottom: 4px; color: #fff; }
.node.contacts { left: 512px; top: 308px; width: 497px; }
.node.addresses { left: 542px; top: 874px; width: 369px; }
.node.users { left: 1526px; top: 422px; width: 437px; }
.node header { height: 46px; margin-bottom: 4px; background: #4aa6ef; border-bottom: 2px solid #3c8cce; border-radius: 5px 5px 0 0; display: flex; padding-right: 12px; }
.addresses header { background: #97c05f; border-color: #7da548; padding-left: 8px; }
.node h3 { flex: 1; font-size: 28px; line-height: 51px; text-align: center; padding-left: 35px; text-shadow: 0 0 3px rgba(0, 0, 0, .55); }
.addresses h3 { padding-left: 4px; }
.node header .dots { margin-top: 20px; }
.doc { width: 24px; height: 24px; margin-top: 11px; }
.row { height: 36px; display: flex; padding-left: 58px; }
.row span { flex: 1; font-size: 24px; line-height: 34px; white-space: nowrap; }
.row em { font-size: 22px; line-height: 31px; height: 31px; color: #ddd; transform: skewX(-14deg); transform-origin: 0 24px; }
.row b { width: 33px; margin: 0 24px 0 18px; font-size: 22px; font-weight: 400; line-height: 31px; }
.users .row b, .addresses .row b { margin-right: 23px; }
.key { width: 32px; height: 18px; margin: 10px 14px 0 -46px; }
.sq { color: #6cc24a; font-weight: 500; }
.cu { color: #d3a23c; font-weight: 500; }
.sq.open { margin-left: 8px; } .cu { margin-left: 2px; } .cu.two { margin-left: 4px; } .sq.far { margin-left: 10px; } .sq.wide { margin-left: 12px; }
.nested { margin: 0 8px 0 50px; background: #363636; border-radius: 0 6px 6px 0; background-image: repeating-linear-gradient(#97c05f 0 6px, transparent 6px 10px); background-size: 2px 100%; background-repeat: no-repeat; }
.nested .row { padding-left: 52px; }
.nested .row b { margin-right: 16px; }

.tabs { height: 60px; margin: 0 8px; padding: 0 10px; background: #444; display: flex; justify-content: space-between; }
.tab { width: 198px; height: 48px; background: #333; border-radius: 0 0 8px 8px; font-size: 22px; line-height: 51px; text-align: center; white-space: nowrap; }
.add { width: 153px; height: 36px; margin-top: 15px; border-radius: 18px; background: #555; color: #fff; font-size: 19px; line-height: 36px; }

/* details panel */
.details { background: #444; box-shadow: inset -2px 0 #505050; }
.dhead { height: 82px; display: flex; justify-content: space-between; padding: 25px 12px 0 38px; border-bottom: 2px solid #3d3d3d; }
.dhead h2 { display: block; height: 48px; padding: 0; font-size: 24px; line-height: 40px; width: 207px; white-space: nowrap; letter-spacing: -.1px; border-bottom: 4px solid #4a96ea; }
.details h4 { height: 64px; display: flex; font-weight: 400; font-size: 22px; line-height: 49px; color: #fff; padding-left: 19px; text-shadow: 0 2px 4px rgba(0, 0, 0, .6); }
.details h4 svg { width: 18px; height: 12px; margin: 19px 18px 0 0; color: #ddd; }
.field { display: flex; padding-left: 16px; }
.field label { width: 206px; font-size: 24px; line-height: 37px; height: 36px; white-space: nowrap; }
.input { width: 542px; height: 36px; border-radius: 4px; background: #636363; color: #fff; font-size: 24px; line-height: 37px; padding-left: 5px; white-space: nowrap; }
.desc { margin-top: 7px; }
.desc label { padding-top: 17px; }
.area { height: 70px; display: flex; align-items: flex-end; justify-content: flex-end; padding: 0 3px 3px 0; }
.area svg { width: 16px; height: 16px; }
.pick { margin-top: 7px; }
.pick label, .mode label { line-height: 32px; }
.pick + .pick { margin-top: 18px; }
.palette { width: 542px; height: 282px; border: 2px solid #3b3b3b; border-radius: 9px; padding: 19px 0 0 20px; display: grid; grid-template-columns: repeat(9, 40px); grid-auto-rows: 40px; gap: 10px; }
.palette i { border-radius: 50%; }
.palette .none { border: 2px solid #3d3d3d; background: conic-gradient(#3f3f3f 25%, #444 0 50%, #3f3f3f 0 75%, #444 0) -4px -4px / 30px 40px; }
.mode { margin-top: 17px; }
.mode .input { height: 37px; line-height: 37px; padding: 0 10px 0 3px; display: flex; justify-content: space-between; }
.mode svg { width: 16px; height: 9px; margin-top: 16px; }
.keys { display: flex; margin: 8px 0 0 222px; font-size: 24px; line-height: 36px; }
.switch { width: 52px; height: 26px; margin: 5px 11px 0 0; border-radius: 13px; background: radial-gradient(circle at 39px 12px, #ccc 0 11.500px, #5a6a80 12.500px, #4a8ede 19px, #4a96ea 22px); }

/* status bar */
.status { height: 48px; flex: none; display: flex; padding: 0 20px; color: #fff; font-size: 22px; line-height: 47px; white-space: pre; background: linear-gradient(transparent 50%, rgba(0, 0, 0, .1)), linear-gradient(90deg, #69ad5b 0, #6f1880 25%, #df2e20 50%, #f0a63a 75%, #4a96ec 100%); }
.s1 { width: 217px; } .s2 { width: 185px; } .s3 { width: 331px; }
.right { margin-left: auto; display: flex; }
.expand { width: 20px; height: 20px; margin-top: 15px; }
.minus, .plus { width: 22px; height: 22px; margin-top: 14px; }
.minus { margin-left: 41px; } .plus { margin-left: 1px; }
.zoom { width: 165px; margin-left: 30px; }
.fb { width: 137px; margin: 2px 0 0 38px; }
.nt { width: 155px; margin-top: 2px; }

/* desktop and dock */
.desk { height: 170px; flex: none; position: relative; display: flex; justify-content: center; background: linear-gradient(90deg, #2d1b87, #231770 40%, #2b1b8e); }
.wall { position: absolute; inset: 0; width: 3584px; height: 170px; }
.desk::after { content: ""; position: absolute; inset: 0 0 auto; height: 70px; background: linear-gradient(rgba(8, 4, 24, .6), rgba(8, 4, 24, .3) 35%, transparent); }
.dock { position: relative; z-index: 1; width: 1840px; height: 158px; margin-top: 2px; padding: 4px 4px 0; display: flex; border: 2px solid rgba(255, 255, 255, .2); border-radius: 44px; background: linear-gradient(rgba(90, 90, 130, .18), transparent 50%), linear-gradient(97deg, #6f5fd6 0, #7660e2 30%, #8660f5 50%, #a55df0 72%, #b05ff4 100%); }
.app { width: 136px; height: 148px; display: flex; flex-direction: column; align-items: center; }
.app > svg { width: 136px; height: 132px; overflow: visible; filter: drop-shadow(0 2px 2px rgba(0, 0, 0, .25)); }
.run::after { content: ""; width: 8px; height: 8px; margin-top: 8px; border-radius: 50%; background: #1a0468; }
.rule { width: 2px; height: 118px; margin: 14px 28px 0 30px; background: #7a2fc0; }
.fz { font: italic 700 114px "Liberation Sans", sans-serif; fill: #fff; }
.prompt { font: 700 25px "Liberation Mono", monospace; fill: #fff; }
```
